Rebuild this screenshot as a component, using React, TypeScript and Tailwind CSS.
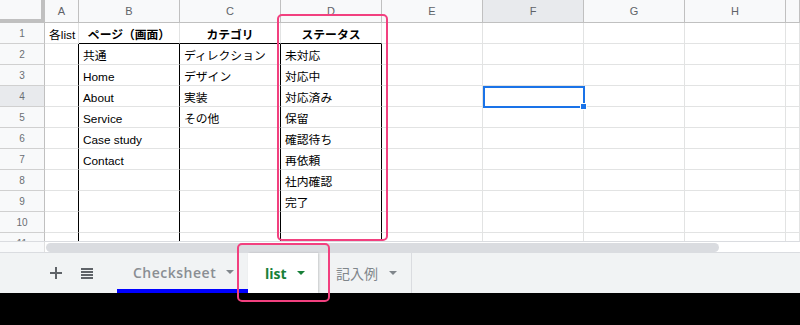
import React from "react";

const COLS = ["A", "B", "C", "D", "E", "F", "G", "H", ""];
const ROWS = 11;

const data: Record<string, string> = {
  A1: "各list",
  B1: "ページ（画面）",
  C1: "カテゴリ",
  D1: "ステータス",
  B2: "共通",
  B3: "Home",
  B4: "About",
  B5: "Service",
  B6: "Case study",
  B7: "Contact",
  C2: "ディレクション",
  C3: "デザイン",
  C4: "実装",
  C5: "その他",
  D2: "未対応",
  D3: "対応中",
  D4: "対応済み",
  D5: "保留",
  D6: "確認待ち",
  D7: "再依頼",
  D8: "社内確認",
  D9: "完了",
};

function Triangle({ color }: { color: string }) {
  return (
    <svg width="8" height="4" viewBox="0 0 8 4" className="shrink-0">
      <path d="M0 0h8L4 4z" fill={color} />
    </svg>
  );
}

function DataCell({ col, row }: { col: string; row: number }) {
  const key = `${col}${row}`;
  const text = data[key] ?? "";
  const blackRight = row >= 2 && ["A", "B", "C", "D"].includes(col);
  const blackBottom = row === 1 && ["B", "C", "D"].includes(col);
  const header = row === 1 && ["B", "C", "D"].includes(col);
  return (
    <div
      className={
        "h-[21px] border-r border-b flex items-center overflow-hidden whitespace-nowrap text-[11.8px] leading-[12px] text-black pt-[4px] " +
        (blackRight ? "border-r-black " : "border-r-[#e2e3e3] ") +
        (blackBottom ? "border-b-black " : "border-b-[#e2e3e3] ") +
        (header ? "justify-center font-bold" : "pl-[4px]")
      }
    >
      {text}
    </div>
  );
}

export default function App() {
  return (
    <div
      className="relative w-[800px] h-[325px] overflow-hidden bg-white"
      style={{ fontFamily: '"Liberation Sans", Arial, "Noto Sans CJK JP", sans-serif' }}
    >
      {/* sheet grid */}
      <div className="relative h-[241px] overflow-hidden">
        <div className="grid grid-cols-[45px_34px_repeat(7,101px)_14px]">
          {/* header row */}
          <div className="h-[23px] bg-[#f8f9fa] border-r-4 border-b-4 border-[#c0c0c0]" />
          {COLS.map((c, i) => (
            <div
              key={i}
              className={
                "h-[23px] border-r border-b border-[#c0c0c0] flex items-center justify-center text-[11px] text-[#5f6368] " +
                (c === "F" ? "bg-[#e8eaed]" : "bg-[#f8f9fa]")
              }
            >
              {c}
            </div>
          ))}
          {Array.from({ length: ROWS }, (_, r) => {
            const row = r + 1;
            return (
              <React.Fragment key={row}>
                <div
                  className={
                    "h-[21px] border-r border-b border-r-[#c0c0c0] border-b-[#d0d0d0] flex items-center justify-center text-[10px] text-[#6a6e73] " +
                    (row === 4 ? "bg-[#e8eaed]" : "bg-[#f8f9fa]")
                  }
                >
                  {row}
                </div>
                {COLS.map((c, i) => (
                  <DataCell key={i} col={c || "I"} row={row} />
                ))}
              </React.Fragment>
            );
          })}
        </div>
        {/* selection */}
        <div className="absolute left-[483px] top-[86px] w-[102px] h-[22px] border-2 border-[#1a73e8]" />
        <div className="absolute left-[580px] top-[103px] w-[7px] h-[7px] bg-[#1a73e8] border border-white" />
      </div>

      {/* scroll bar row */}
      <div className="flex h-[12px] border-t border-b border-[#dadce0]">
        <div className="w-[45px] bg-[#f8f9fa] border-r border-[#e0e0e0]" />
        <div className="flex-1 flex items-center pl-[1px]">
          <div className="w-[673px] h-[9px] rounded-full bg-[#dadce0]" />
        </div>
      </div>

      {/* tab bar */}
      <div
        className="flex h-[40px] bg-[#f1f3f4] items-stretch"
        style={{ fontFamily: '"Open Sans", Roboto, "Noto Sans CJK JP", sans-serif' }}
      >
        <div className="flex items-center pl-[50px]">
          <svg width="12" height="12" viewBox="0 0 12 12">
            <path d="M5 0h2v12H5zM0 5h12v2H0z" fill="#5f6368" />
          </svg>
          <svg width="12" height="11" viewBox="0 0 12 11" className="ml-[19px]">
            <path d="M0 0h12v2H0zM0 3h12v2H0zM0 6h12v2H0zM0 9h12v2H0z" fill="#5f6368" />
          </svg>
        </div>
        <div className="ml-[24px] w-[131px] flex items-center pl-[16px] pt-[2px] border-b-4 border-[#0000ff] text-[14px] font-semibold text-[#8a8e93] tracking-[0.5px]">
          <span>Checksheet</span>
          <span className="ml-[10px]">
            <Triangle color="#80868b" />
          </span>
        </div>
        <div className="w-[70px] bg-white flex items-center pl-[17px] text-[14px] font-bold text-[#188038] shadow-[1px_0_2px_rgba(0,0,0,0.18)]">
          <span>list</span>
          <span className="ml-[10px]">
            <Triangle color="#188038" />
          </span>
        </div>
        <div className="ml-[2px] w-[92px] flex items-center pl-[16px] border-r border-[#dadce0] text-[14px] text-[#80868b]">
          <span>記入例</span>
          <span className="ml-[11px]">
            <Triangle color="#80868b" />
          </span>
        </div>
      </div>

      {/* black bottom */}
      <div className="h-[32px] bg-black" />

      {/* annotations */}
      <div className="absolute left-[277px] top-[14px] w-[111px] h-[227px] rounded-[5px] border-2 border-[#f2407f]" />
      <div className="absolute left-[237px] top-[243px] w-[93px] h-[59px] rounded-[5px] border-2 border-[#f2407f]" />
    </div>
  );
}
